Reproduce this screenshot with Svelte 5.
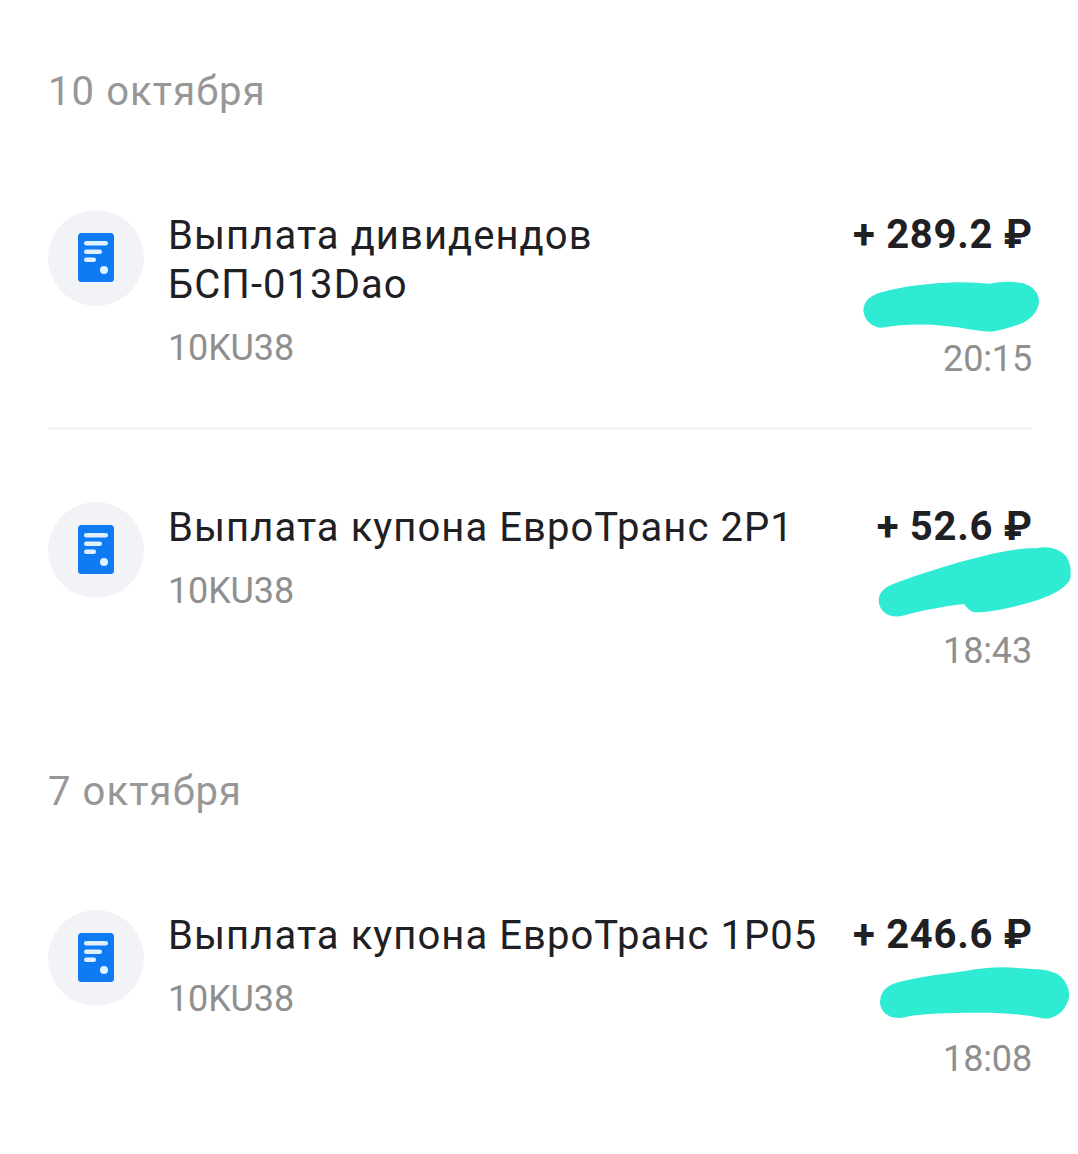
<script>
  const scribbles = {
    a: 'M70 330 C72 300 95 285 125 277 C190 258 270 250 350 247 C390 246 420 250 450 251 C480 245 520 243 550 250 C580 260 597 280 597 305 C595 335 570 360 540 372 C510 382 480 392 450 395 C410 393 370 382 310 377 C250 372 190 372 125 383 C95 382 72 360 70 330 Z',
    b: 'M116 300 C118 275 135 262 165 250 C250 218 340 190 430 168 C490 152 550 143 590 145 C620 136 655 145 675 165 C692 185 695 215 690 240 C670 270 630 290 570 307 C520 322 450 337 405 337 C390 335 380 322 372 312 C320 318 250 330 195 345 C150 360 116 335 116 300 Z',
    c: 'M120 290 C122 255 145 240 175 232 C240 214 310 207 380 197 C430 188 490 183 540 190 C590 193 635 192 660 213 C682 232 692 260 685 285 C672 325 640 345 605 340 C550 328 480 322 410 323 C330 323 250 325 200 335 C155 348 120 325 120 290 Z'
  };
  const groups = [
    { date: '10 октября', rows: [
      { title: ['Выплата дивидендов', 'БСП-013Dao'], amount: '+ 289.2 ₽', time: '20:15', sc: 'a' },
      { title: ['Выплата купона ЕвроТранс 2Р1'], amount: '+ 52.6 ₽', time: '18:43', sc: 'b' }
    ]},
    { date: '7 октября', rows: [
      { title: ['Выплата купона ЕвроТранс 1Р05'], amount: '+ 246.6 ₽', time: '18:08', sc: 'c' }
    ]}
  ];
</script>

<main class="page">
  {#each groups as g}
    <section class="group">
      <h2 class="date">{g.date}</h2>
      <div class="rows">
        {#each g.rows as r}
          <article class="row">
            <div class="badge">
              <svg width="96" height="96" viewBox="0 0 96 96" aria-hidden="true">
                <rect x="30" y="23" width="36" height="49" rx="3.5" fill="#0f7bf2" />
                <rect x="36" y="31" width="24" height="4.5" rx="2.25" fill="#dff1ff" />
                <rect x="36" y="39.5" width="18" height="4.5" rx="2.25" fill="#dff1ff" />
                <rect x="36" y="47.5" width="12" height="4.5" rx="2.25" fill="#dff1ff" />
                <circle cx="56" cy="60" r="4" fill="#dff1ff" />
              </svg>
            </div>
            <div class="info">
              <div class="title">{#each r.title as t}<div>{t}</div>{/each}</div>
              <div class="account">10KU38</div>
            </div>
            <div class="side">
              <div class="amount">{r.amount}</div>
              <div class="time">{r.time}</div>
              <svg class="scribble {r.sc}" width="238" height="190" viewBox="0 0 714 570" aria-hidden="true">
                <path d={scribbles[r.sc]} fill="#2febd4" />
              </svg>
            </div>
          </article>
        {/each}
      </div>
    </section>
  {/each}
</main>

<style>
  :global(body) { margin: 0; background: #fff; }
  .page {
    width: 1078px;
    height: 1154px;
    box-sizing: border-box;
    padding: 68px 46px 0 48px;
    font-family: Roboto, "Noto Sans", sans-serif;
    overflow: hidden;
  }
  .group + .group { margin-top: 93px; }
  .date {
    margin: 0 0 94px;
    font-size: 40px;
    line-height: 48px;
    font-weight: 400;
    letter-spacing: 1.1px;
    color: #979797;
  }
  .row { display: flex; align-items: flex-start; }
  .row + .row {
    margin-top: 44px;
    border-top: 3px solid #f2f3f4;
    padding-top: 72px;
  }
  .badge {
    flex: none;
    width: 96px;
    height: 96px;
    border-radius: 50%;
    background: #f1f3f6;
  }
  .badge svg { display: block; }
  .info { margin-left: 24px; padding-top: 2px; }
  .title {
    font-size: 40px;
    line-height: 48.5px;
    letter-spacing: 1.05px;
    color: #1f2023;
  }
  .account {
    margin-top: 14.8px;
    font-size: 36px;
    line-height: 48px;
    letter-spacing: -0.15px;
    color: #8f8f8f;
  }
  .side {
    position: relative;
    margin-left: auto;
    padding-top: 1px;
    text-align: right;
    white-space: nowrap;
  }
  .amount {
    font-size: 40px;
    line-height: 48px;
    font-weight: 700;
    letter-spacing: 0.7px;
    margin-right: -0.7px;
    color: #1f2023;
  }
  .time {
    margin-top: 76px;
    font-size: 36px;
    line-height: 48px;
    letter-spacing: -0.15px;
    color: #8f8f8f;
  }
  .scribble { position: absolute; right: -46px; }
  .scribble.a { top: -10px; }
  .scribble.b { top: -2px; }
  .scribble.c { top: -5px; }
</style>
